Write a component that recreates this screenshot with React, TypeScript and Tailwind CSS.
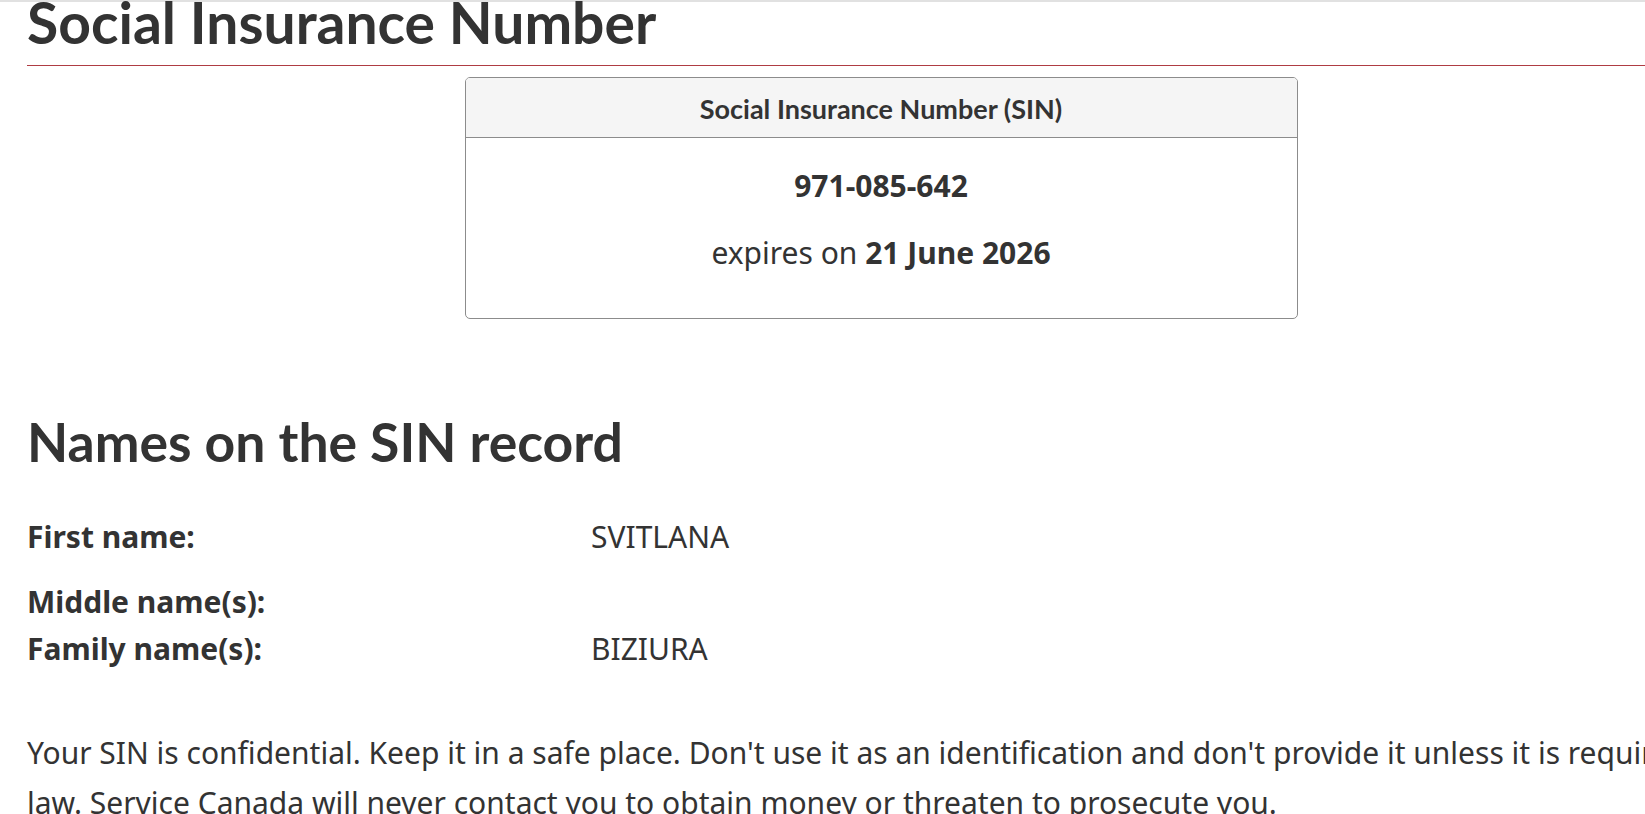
import React from "react";

export default function App() {
  return (
    <div className="w-[1645px] h-[814px] overflow-hidden bg-white text-[#333] font-['Noto_Sans',sans-serif] text-[30px]">
      <div className="h-[2px] w-full bg-[#e1e1e1]" />
      <div className="w-[1735px] pl-[27px]">
        <h1 className="font-['Lato',sans-serif] font-bold text-[57px] leading-[40px] pb-[23px] border-b border-[#af3c43] whitespace-nowrap">
          Social Insurance Number
        </h1>

        <div className="mt-[11px] w-[833px] mx-auto border border-[#8c8c8c] rounded-[5px] overflow-hidden">
          <div className="h-[60px] pt-[4px] bg-[#f5f5f5] border-b border-[#8c8c8c] flex items-center justify-center font-['Lato',sans-serif] font-bold text-[27px]">
            Social Insurance Number (SIN)
          </div>
          <div className="pt-[23px] pb-[24px] text-center leading-[49.5px]">
            <p className="mb-[17px] font-bold">971-085-642</p>
            <p className="mb-[17px]">
              expires on <strong className="font-bold">21 June 2026</strong>
            </p>
          </div>
        </div>

        <h2 className="mt-[92px] font-['Lato',sans-serif] font-bold text-[53.5px] leading-[60px]">
          Names on the SIN record
        </h2>

        <div className="mt-[42px] grid grid-cols-[564px_1fr] leading-[47px]">
          <div className="font-bold mb-[18px]">First name:</div>
          <div className="mb-[18px]">SVITLANA</div>
          <div className="font-bold">Middle name(s):</div>
          <div></div>
          <div className="font-bold">Family name(s):</div>
          <div>BIZIURA</div>
        </div>

        <p className="mt-[56px] leading-[49.5px] whitespace-nowrap">
          Your SIN is confidential. Keep it in a safe place. Don't use it as an identification and don't provide it unless it is required by
          <br />
          law. Service Canada will never contact you to obtain money or threaten to prosecute you.
        </p>
      </div>
    </div>
  );
}
